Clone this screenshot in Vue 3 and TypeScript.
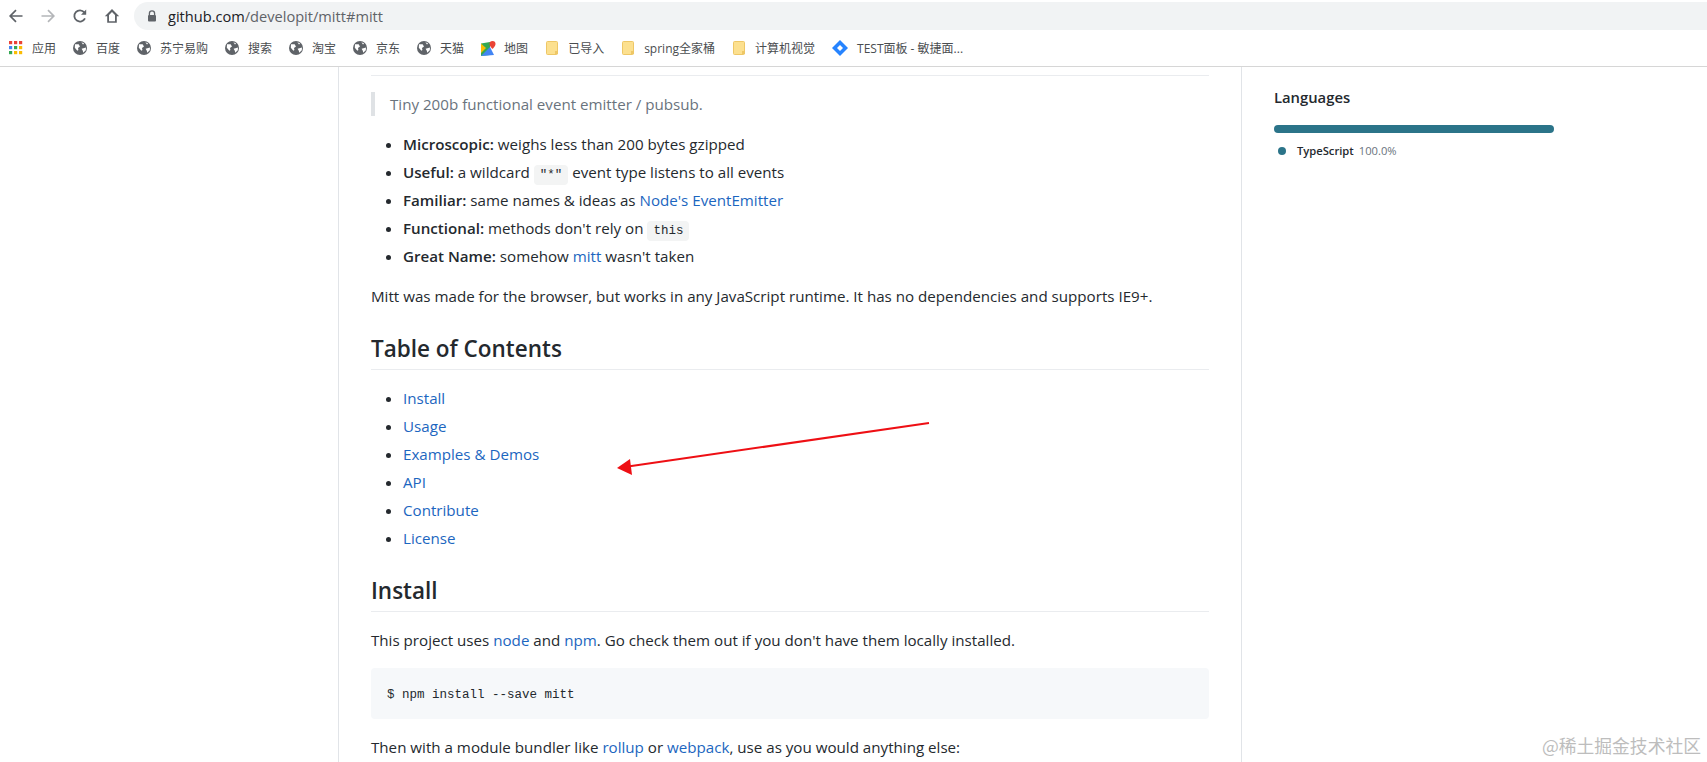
<template>
  <div class="screen">
    <header class="chrome">
      <div class="toolbar">
        <div class="nav-btn">
          <svg width="16" height="16" viewBox="0 0 16 16"><path d="M14.5 8H2.5M8 2.2 2.2 8 8 13.8" fill="none" stroke="#5f6368" stroke-width="1.7" /></svg>
        </div>
        <div class="nav-btn">
          <svg width="16" height="16" viewBox="0 0 16 16"><path d="M1.5 8h12M8 2.2 13.8 8 8 13.8" fill="none" stroke="#b4b6b9" stroke-width="1.7" /></svg>
        </div>
        <div class="nav-btn">
          <svg width="16" height="16" viewBox="0 0 16 16"><path d="M13 10.4A5.6 5.6 0 1 1 12.3 4.4" fill="none" stroke="#5f6368" stroke-width="1.8" /><path d="M14.2 1.6v5.2H9z" fill="#5f6368" /></svg>
        </div>
        <div class="nav-btn">
          <svg width="18" height="18" viewBox="0 0 18 18"><path d="M9 2 1.8 9.2h2.4v6.6h9.6V9.2h2.4zM6 14.2V8l3-3 3 3v6.2z" fill="#5f6368" fill-rule="evenodd" /></svg>
        </div>
        <div class="address">
          <svg width="10" height="12" viewBox="0 0 10 12"><path d="M2.4 5V3.4a2.6 2.6 0 0 1 5.2 0V5" fill="none" stroke="#5f6368" stroke-width="1.3" /><rect x="1" y="5" width="8" height="6.5" rx="1" fill="#5f6368" /></svg>
          <span class="url">github.com<span class="url-path">/developit/mitt#mitt</span></span>
        </div>
      </div>
      <nav class="bookmarks">
        <div v-for="b in bookmarks" :key="b.label" class="bookmark" :class="b.icon">
          <svg v-if="b.icon === 'apps'" width="14" height="14" viewBox="0 0 14 14">
            <rect v-for="c in appCells" :key="c.x + '-' + c.y" :x="c.x" :y="c.y" width="3.2" height="3.2" :fill="c.fill" />
          </svg>
          <svg v-else-if="b.icon === 'globe'" width="14" height="14" viewBox="0 0 14 14">
            <circle cx="7" cy="7" r="7" fill="#5f6368" />
            <path d="M2 3.2h3.6L7 5.4 5 7l.4 2-1 .8L1.8 6.8zM8.4 1.2l2.8 1.2-1.2 1.2zM8.6 7.8l4.4-1.4-.2 2.8-2.6 2.6-.4-2z" fill="#fff" />
          </svg>
          <svg v-else-if="b.icon === 'map'" width="15" height="15" viewBox="0 0 15 15">
            <path d="M0 2.5 9 1v13l-9 1z" fill="#34a853" />
            <path d="M0 15 9 6l4 8z" fill="#4285f4" />
            <path d="M0 2.5 5 7 0 12z" fill="#fbbc04" />
            <path d="M11.5 0a3 3 0 0 1 3 3c0 2-3 5-3 5s-3-3-3-5a3 3 0 0 1 3-3z" fill="#ea4335" />
          </svg>
          <svg v-else-if="b.icon === 'folder'" width="12" height="14" viewBox="0 0 12 14">
            <path d="M1.5.5h9a1 1 0 0 1 1 1v11a1 1 0 0 1-1 1h-9a1 1 0 0 1-1-1v-11a1 1 0 0 1 1-1z" fill="#fce08f" stroke="#eec766" />
            <rect x="9" y="10" width="3" height="3" fill="#eec766" />
          </svg>
          <svg v-else width="16" height="16" viewBox="0 0 16 16">
            <path d="M8 0 16 8 8 16 0 8z" fill="#2684ff" />
            <path d="M8 5 11 8 8 11 5 8z" fill="#fff" />
          </svg>
          <span>{{ b.label }}</span>
        </div>
      </nav>
    </header>

    <div class="page">
      <main class="readme">
        <div class="rule-top"></div>
        <blockquote>Tiny 200b functional event emitter / pubsub.</blockquote>
        <ul class="features">
          <li><strong>Microscopic:</strong> weighs less than 200 bytes gzipped</li>
          <li><strong>Useful:</strong> a wildcard <code>"*"</code> event type listens to all events</li>
          <li><strong>Familiar:</strong> same names &amp; ideas as <a>Node's EventEmitter</a></li>
          <li><strong>Functional:</strong> methods don't rely on <code>this</code></li>
          <li><strong>Great Name:</strong> somehow <a>mitt</a> wasn't taken</li>
        </ul>
        <p class="intro">Mitt was made for the browser, but works in any JavaScript runtime. It has no dependencies and supports IE9+.</p>
        <h2>Table of Contents</h2>
        <ul class="toc">
          <li v-for="item in toc" :key="item"><a>{{ item }}</a></li>
        </ul>
        <h2 class="install">Install</h2>
        <p class="uses">This project uses <a>node</a> and <a>npm</a>. Go check them out if you don't have them locally installed.</p>
        <pre>$ npm install --save mitt</pre>
        <p>Then with a module bundler like <a>rollup</a> or <a>webpack</a>, use as you would anything else:</p>
      </main>
      <aside class="sidebar">
        <h3>Languages</h3>
        <div class="lang-bar"></div>
        <div class="lang-row">
          <i class="dot"></i>
          <b>TypeScript</b>
          <span>100.0%</span>
        </div>
      </aside>
    </div>

    <svg class="arrow" width="330" height="70" viewBox="0 0 330 70">
      <path d="M323 5 22 48.5" stroke="#ee0f14" stroke-width="2" fill="none" />
      <path d="M11 50 24 41 26 57z" fill="#ee0f14" />
    </svg>
    <div class="watermark">@稀土掘金技术社区</div>
  </div>
</template>

<script setup lang="ts">
type Bookmark = { icon: string; label: string }

const bookmarks: Bookmark[] = [
  { icon: 'apps', label: '应用' },
  { icon: 'globe', label: '百度' },
  { icon: 'globe', label: '苏宁易购' },
  { icon: 'globe', label: '搜索' },
  { icon: 'globe', label: '淘宝' },
  { icon: 'globe', label: '京东' },
  { icon: 'globe', label: '天猫' },
  { icon: 'map', label: '地图' },
  { icon: 'folder', label: '已导入' },
  { icon: 'folder', label: 'spring全家桶' },
  { icon: 'folder', label: '计算机视觉' },
  { icon: 'diamond', label: 'TEST面板 - 敏捷面...' }
]

const appColors = ['#ea4335', '#ea4335', '#ea4335', '#4285f4', '#34a853', '#fbbc04', '#34a853', '#fbbc04', '#fbbc04']
const appCells = appColors.map((fill, i) => ({
  x: (i % 3) * 5,
  y: Math.floor(i / 3) * 5,
  fill
}))

const toc = ['Install', 'Usage', 'Examples & Demos', 'API', 'Contribute', 'License']
</script>

<style>
html, body { margin: 0; background: #fff; }
</style>

<style scoped>
.screen {
  position: relative;
  width: 1707px;
  height: 762px;
  overflow: hidden;
  background: #fff;
  color: #24292e;
  font-family: "Open Sans", "Noto Sans CJK SC", sans-serif;
}

.chrome {
  height: 66px;
  border-bottom: 1px solid #d6d6d6;
}

.toolbar {
  height: 32px;
  display: flex;
  align-items: center;
}

.nav-btn {
  width: 32px;
  flex: none;
  display: flex;
  justify-content: center;
  align-items: center;
}

.address {
  flex: 1;
  height: 28px;
  margin: 0 -20px 0 6px;
  padding-left: 13px;
  border-radius: 14px;
  background: #f1f3f4;
  display: flex;
  align-items: center;
  gap: 11px;
}

.url {
  font-family: "Open Sans", sans-serif;
  font-size: 14.6px;
  color: #202124;
}

.url-path { color: #5f6368; }

.bookmarks {
  height: 32px;
  display: flex;
  align-items: center;
  gap: 17px;
  padding-left: 9px;
  font-size: 12px;
  color: #4a4d50;
  white-space: nowrap;
}

.bookmark {
  display: flex;
  align-items: center;
  gap: 9px;
}

.bookmark.map { gap: 8px; }

.bookmark.folder {
  gap: 10px;
  margin-left: 1px;
}

.page {
  display: flex;
}

.readme {
  box-sizing: border-box;
  width: 904px;
  margin-left: 338px;
  padding: 8px 32px 0;
  border-left: 1px solid #e1e4e8;
  border-right: 1px solid #e1e4e8;
  height: 696px;
  font-size: 15.15px;
  line-height: 28px;
}

.rule-top {
  height: 1px;
  background: #eaecef;
}

blockquote {
  margin: 16px 0 0;
  padding-left: 15px;
  border-left: 4px solid #dfe2e5;
  color: #6a737d;
  height: 24px;
  line-height: 24px;
}

ul {
  margin: 0;
  padding-left: 32px;
}

li { height: 28px; }

.features { margin-top: 14px; }
.toc { margin-top: 14px; }

strong { font-weight: 600; }

a { color: #1c66c0; }

code {
  font-family: "Liberation Mono", monospace;
  font-size: 12.5px;
  line-height: 1;
  background: #f3f4f4;
  border-radius: 4px;
  padding: 3px 6px;
}

p { margin: 0; }

.intro { margin-top: 12px; }

h2 {
  margin: 24px 0 0;
  padding-bottom: 5px;
  border-bottom: 1px solid #eaecef;
  font-size: 22.5px;
  font-weight: 600;
  line-height: 30px;
}

.install { margin-top: 24px; }
.uses { margin-top: 14px; }

pre {
  margin: 14px 0 0;
  height: 51px;
  padding-left: 16px;
  border-radius: 4px;
  background: #f6f8fa;
  font-family: "Liberation Mono", monospace;
  font-size: 12.5px;
  line-height: 55px;
}

pre + p { margin-top: 14px; }

.sidebar {
  padding: 20px 0 0 32px;
  width: 280px;
}

h3 {
  margin: 0;
  font-size: 14.8px;
  font-weight: 600;
  line-height: 21px;
}

.lang-bar {
  margin-top: 17px;
  height: 8px;
  border-radius: 4px;
  background: #2b7489;
}

.lang-row {
  margin-top: 10px;
  padding-left: 4px;
  display: flex;
  align-items: center;
  font-size: 11.2px;
  line-height: 16px;
}

.dot {
  width: 8px;
  height: 8px;
  border-radius: 50%;
  background: #2b7489;
  margin-right: 11px;
}

.lang-row b { font-weight: 600; margin-right: 5px; }
.lang-row span { color: #6a737d; }

.arrow {
  position: absolute;
  left: 606px;
  top: 418px;
}

.watermark {
  position: absolute;
  right: 6px;
  top: 733px;
  font-size: 17.8px;
  line-height: 24px;
  color: #bdbdbd;
  font-family: "Noto Sans CJK SC", sans-serif;
}
</style>
